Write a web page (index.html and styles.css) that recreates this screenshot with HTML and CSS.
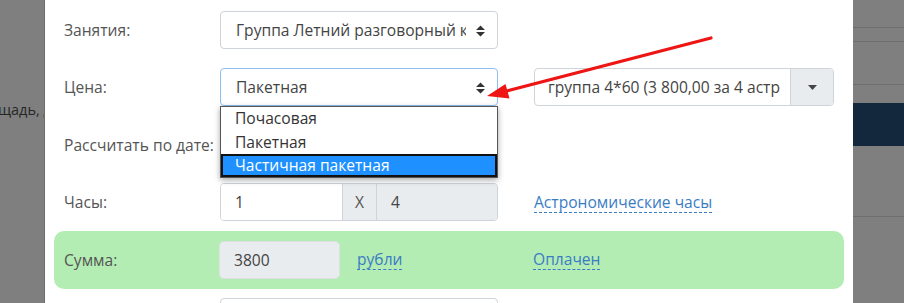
FILE: index.html
```html
<!DOCTYPE html>
<html lang="ru">
<head>
    <meta charset="UTF-8" />
    <title>Занятия</title>
    <link rel="stylesheet" href="styles.css">
</head>
<body>
<div class="screen">
    <!-- затемнённая страница слева -->
    <div class="bg-left"><span>щадь, до</span></div>

    <div class="modal">
        <div class="form-row">
            <label>Занятия:</label>
            <div class="select">
                <span class="select-text">Группа Летний разговорный курс</span>
                <svg class="sort-icon" width="9" height="12" viewBox="0 0 9 12"><path d="M0 5 L4.5 0.5 L9 5 Z M0 7 L9 7 L4.5 11.5 Z" fill="#333"/></svg>
            </div>
        </div>

        <div class="form-row">
            <label>Цена:</label>
            <div class="select-wrap">
                <div class="select focused">
                    <span class="select-text">Пакетная</span>
                    <svg class="sort-icon" width="9" height="12" viewBox="0 0 9 12"><path d="M0 5 L4.5 0.5 L9 5 Z M0 7 L9 7 L4.5 11.5 Z" fill="#333"/></svg>
                </div>
                <ul class="dropdown">
                    <li>Почасовая</li>
                    <li>Пакетная</li>
                    <li class="active">Частичная пакетная</li>
                </ul>
            </div>
            <div class="combo">
                <span class="combo-text">группа 4*60 (3 800,00 за 4 астрономических часа)</span>
                <div class="combo-btn">
                    <svg width="9" height="5" viewBox="0 0 9 5"><path d="M0 0 L9 0 L4.5 5 Z" fill="#444"/></svg>
                </div>
            </div>
        </div>

        <div class="form-row">
            <label>Рассчитать по дате:</label>
        </div>

        <div class="form-row">
            <label>Часы:</label>
            <div class="input-group">
                <div class="input">1</div>
                <div class="addon">X</div>
                <div class="input readonly">4</div>
            </div>
            <a class="dashed third">Астрономические часы</a>
        </div>

        <div class="form-row sum-row">
            <label>Сумма:</label>
            <div class="sum-cell">
                <div class="input readonly sum-input">3800</div>
                <a class="dashed">рубли</a>
            </div>
            <a class="dashed third">Оплачен</a>
        </div>

        <div class="form-row">
            <label></label>
            <div class="input wide"></div>
        </div>
    </div>

    <!-- затемнённая страница справа -->
    <div class="bg-right">
        <div class="strip" style="height:27px"></div>
        <div class="strip" style="height:13px"></div>
        <div class="strip" style="height:42px"></div>
        <div class="strip plain" style="height:18px"></div>
        <div class="band"></div>
        <div class="strip" style="height:70px"></div>
    </div>

    <!-- красная стрелка-пометка -->
    <svg class="arrow" width="904" height="303" viewBox="0 0 904 303">
        <line x1="711" y1="38" x2="503" y2="92" stroke="#ee1515" stroke-width="3.2" stroke-linecap="round"/>
        <polygon points="487,96 505.5,84 509.5,98.5" fill="#ee1515"/>
    </svg>
</div>
</body>
</html>
```

FILE: styles.css
```css
body {
    margin:0;
    font-family:"Open Sans", "Noto Sans", sans-serif;
    font-size:15.6px;
    background:#7f7f7f;
    overflow:hidden;
}

.screen {
    display:flex;
    height:303px;
    position:relative;
}

/* фон страницы под модальным окном */
.bg-left {
    width:45px;
    border-right:1px solid #6c6c6c;
    overflow:hidden;
    white-space:nowrap;
    color:#262626;
    font-size:14.5px;
    padding-top:100px;
    text-indent:-2px;
    box-sizing:border-box;
}

.bg-right {
    flex:1;
    display:flex;
    flex-direction:column;
}

.bg-right .strip {
    border-bottom:1px solid #6e6e6e;
}

.bg-right .strip.plain {
    border-bottom:none;
}

.bg-right .band {
    height:43px;
    background:#13283d;
}

.modal {
    width:808px;
    background:#fff;
    padding:1px 9px 0;
    box-sizing:border-box;
}

/* строки формы */
.form-row {
    display:flex;
    align-items:center;
    padding:9.75px 10px;
    min-height:38px;
}

.form-row label {
    width:156px;
    flex:none;
    color:#555;
}

.form-row .third {
    margin-left:36px;
}

.select-wrap {
    position:relative;
    width:278px;
}

.select {
    width:278px;
    height:38px;
    box-sizing:border-box;
    border:1px solid #ced4da;
    border-radius:4px;
    display:flex;
    align-items:center;
    padding:0 12px 0 15px;
    color:#444;
}

.select.focused {
    border-color:#8fbff0;
}

.select-text {
    flex:1;
    overflow:hidden;
    white-space:nowrap;
    margin-right:10px;
}

.sort-icon {
    flex:none;
    margin-top:2px;
}

.dropdown {
    position:absolute;
    top:100%;
    left:0;
    width:278px;
    box-sizing:border-box;
    margin:0;
    padding:0;
    list-style:none;
    background:#fff;
    border:1px solid #555;
    box-shadow:0 2px 6px rgba(0,0,0,0.35);
    color:#333;
    z-index:2;
}

.dropdown li {
    height:23.3px;
    line-height:23.3px;
    padding-left:14px;
}

.dropdown li.active {
    background:#1e90ff;
    color:#fff;
    box-shadow:inset 0 0 0 2px #111;
}

.combo {
    margin-left:36px;
    width:300px;
    height:38px;
    box-sizing:border-box;
    border:1px solid #ced4da;
    border-radius:4px;
    display:flex;
    color:#444;
}

.combo-text {
    flex:1;
    overflow:hidden;
    white-space:nowrap;
    line-height:36px;
    margin-left:13px;
    margin-right:10px;
}

.combo-btn {
    width:42px;
    flex:none;
    background:#e9ecef;
    border-left:1px solid #ced4da;
    border-radius:0 3px 3px 0;
    display:flex;
    align-items:center;
    justify-content:center;
}

/* поля ввода */
.input-group {
    width:278px;
    height:38px;
    display:flex;
    box-sizing:border-box;
    border:1px solid #ced4da;
    border-radius:4px;
    overflow:hidden;
}

.input-group .input {
    border:none;
    border-radius:0;
    height:36px;
}

.input-group .input:first-child {
    width:121px;
}

.input-group .input.readonly {
    flex:1;
}

.addon {
    width:33px;
    background:#e9ecef;
    border-left:1px solid #ced4da;
    border-right:1px solid #ced4da;
    text-align:center;
    line-height:36px;
    color:#555;
}

.input {
    height:38px;
    box-sizing:border-box;
    border:1px solid #ced4da;
    border-radius:4px;
    padding-left:14px;
    line-height:36px;
    color:#444;
    background:#fff;
}

.input.readonly {
    background:#e9ecef;
}

.input.wide {
    width:278px;
}

.sum-row {
    background:#b3edb3;
    border-radius:10px;
}

.sum-cell {
    width:278px;
    display:flex;
    align-items:center;
    margin-left:-1px;
}

.sum-input {
    width:121px;
    border-color:#dde1e5;
    border-radius:5px;
    margin-right:17px;
}

a.dashed {
    color:#3a7cc4;
    text-decoration:none;
    border-bottom:1px dashed #3a7cc4;
    line-height:20px;
}

.arrow {
    position:absolute;
    left:0;
    top:0;
    pointer-events:none;
    z-index:3;
}
```
